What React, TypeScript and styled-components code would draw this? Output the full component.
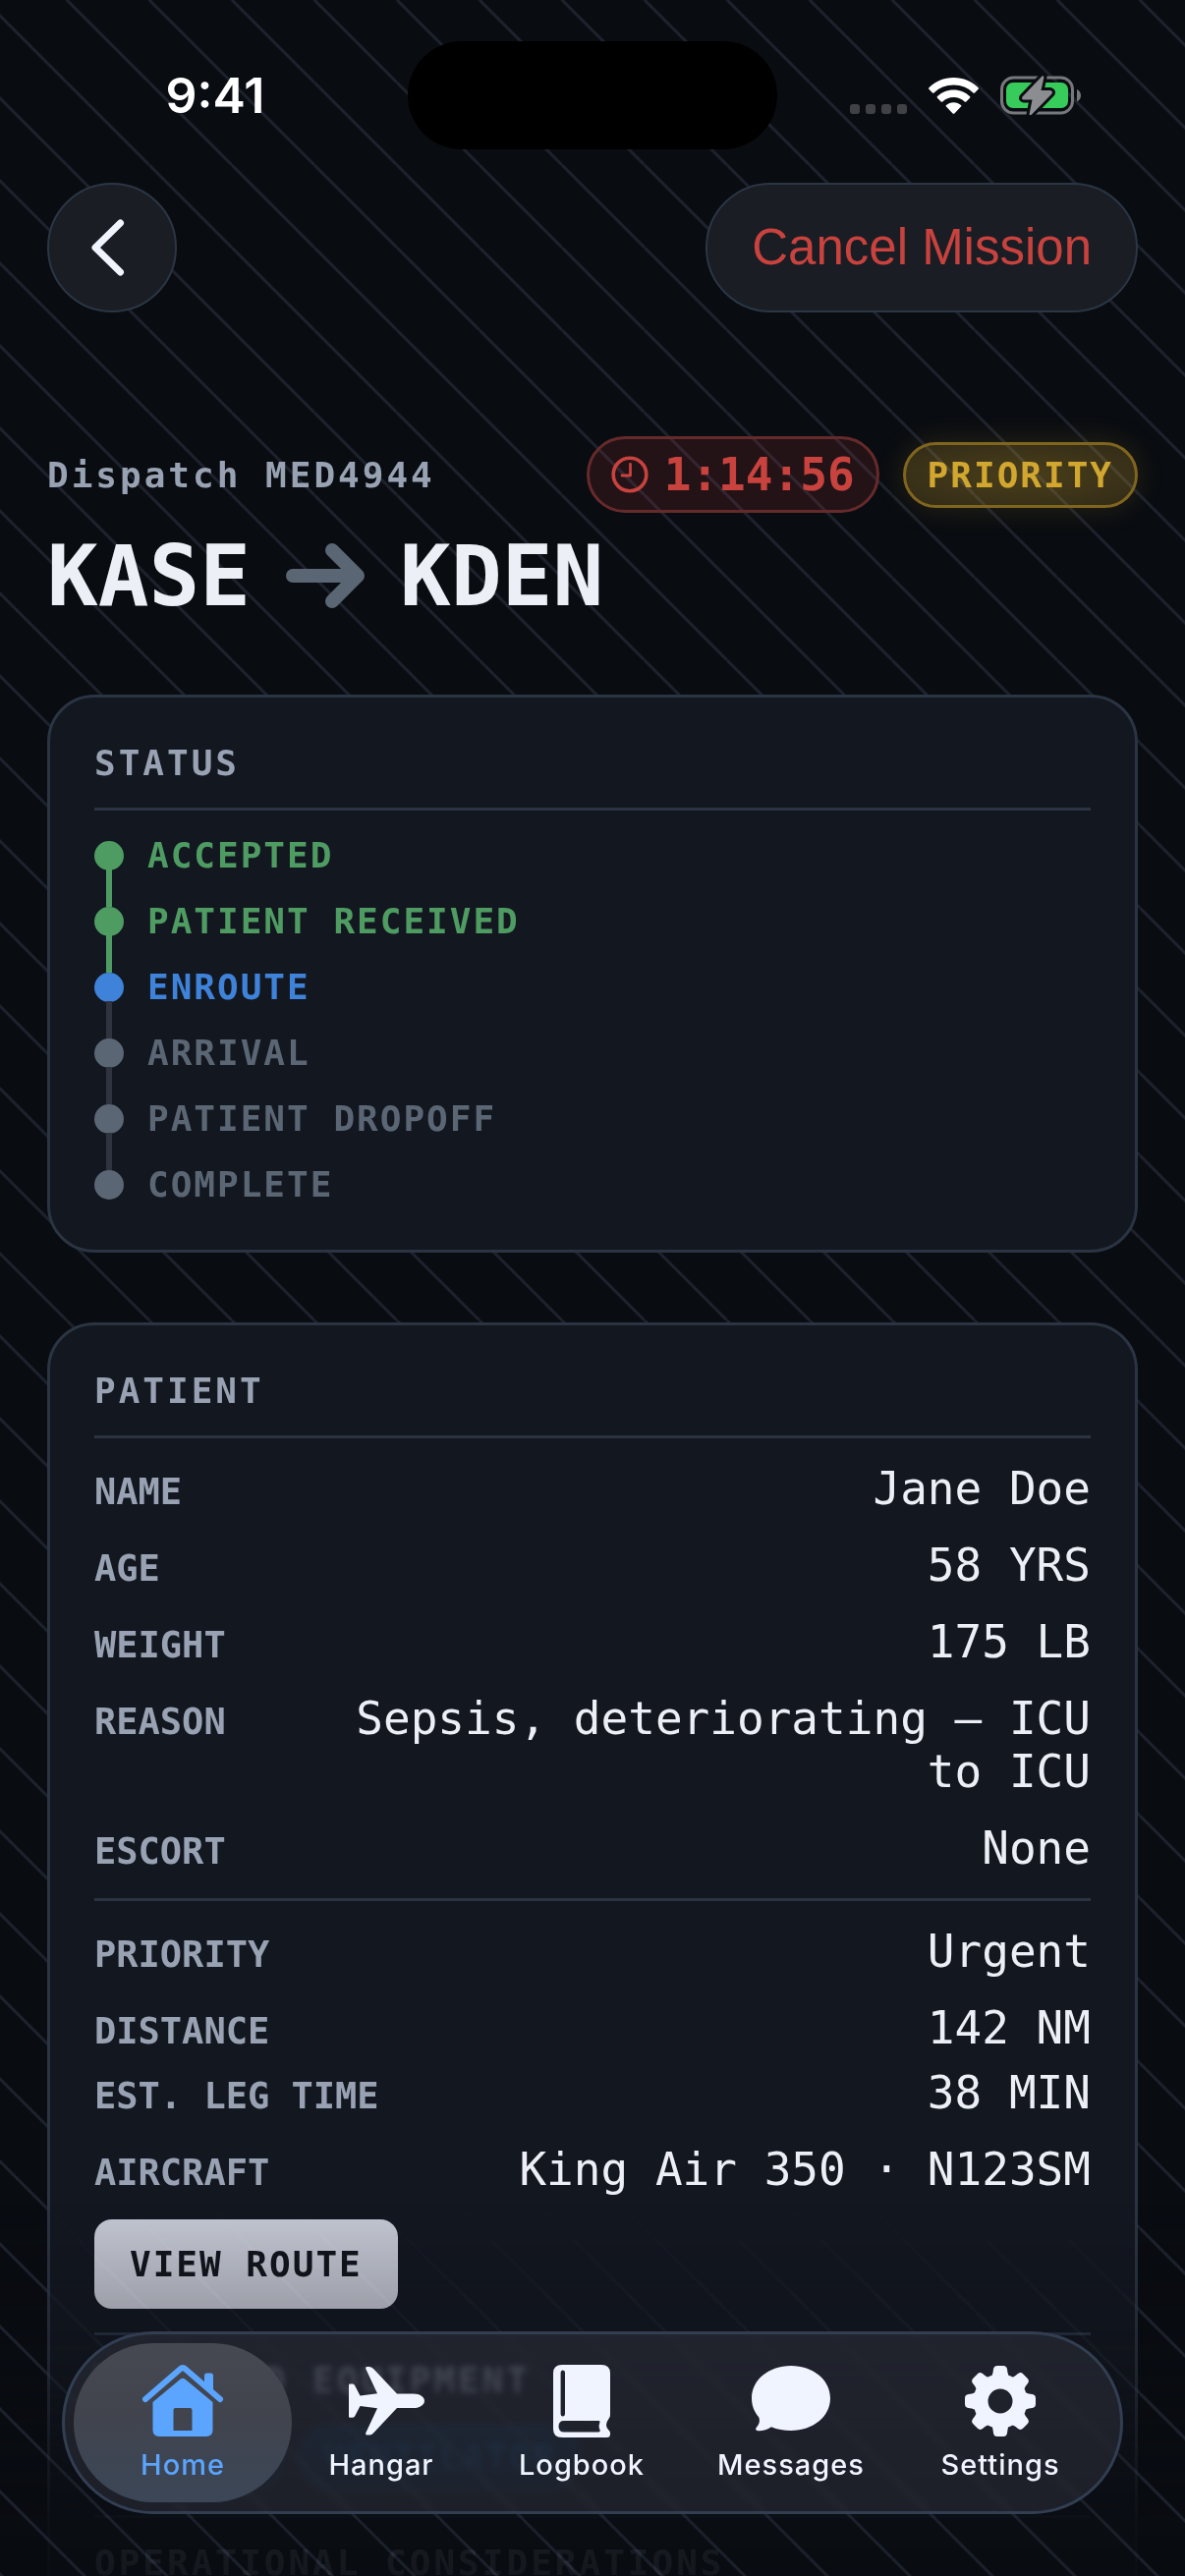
import React from 'react';
import styled, { createGlobalStyle, css } from 'styled-components';

const mono = '"DejaVu Sans Mono", "Liberation Mono", monospace';
const sans = 'Inter, "Liberation Sans", sans-serif';

const color = {
  page: '#090c11',
  card: '#131720',
  line: '#2b3442',
  text: '#eceff5',
  label: '#98a2b2',
  dim: '#5b6674',
  green: '#4f9c63',
  blue: '#3e83d9',
  red: '#c8423e',
  gold: '#d2a72f',
};

const GlobalStyle = createGlobalStyle`
  *, *::before, *::after { box-sizing: border-box; }
  html, body { margin: 0; background: ${color.page}; }
  h1, h2, p, ul, ol, dl, dd { margin: 0; padding: 0; }
  ul, ol { list-style: none; }
  button { font: inherit; cursor: pointer; border: 0; padding: 0; }
`;

/* ---------- backdrop ---------- */

const stripes = css`
  background-color: ${color.page};
  background-image: linear-gradient(
    45deg,
    #1d222d 0%,
    transparent 1.8%,
    transparent 48.2%,
    #1d222d 49.3%,
    #1d222d 50.7%,
    transparent 51.8%,
    transparent 98.2%,
    #1d222d 100%
  );
  background-size: 84px 84px;
  background-position: 68px 0;
`;

const Screen = styled.div`
  ${stripes}
  position: relative;
  height: 100vh;
  overflow: hidden;
  color: ${color.text};
  font-family: ${mono};
`;

const Veil = styled.div`
  ${stripes}
  position: absolute;
  inset: 0;
  pointer-events: none;
  mask-image: linear-gradient(to top, rgba(0, 0, 0, 0.92) 0, rgba(0, 0, 0, 0.88) 60px, rgba(0, 0, 0, 0.3) 230px, transparent 380px);
`;

/* ---------- system status bar ---------- */

const SystemBar = styled.header`
  display: grid;
  grid-template-columns: 1fr 376px 1fr;
  align-items: center;
  height: 110px;
  margin-top: 42px;
`;

const Clock = styled.time`
  justify-self: center;
  padding-left: 23px;
  font: 600 50px/60px ${sans};
  color: #fff;
`;

const Island = styled.div`
  height: 110px;
  border-radius: 55px;
  background: #000;
`;

const SystemIcons = styled.div`
  display: flex;
  align-items: center;
  justify-content: flex-end;
  gap: 22px;
  padding-right: 106px;
`;

const SignalDots = styled.div`
  display: flex;
  align-self: flex-end;
  gap: 6px;
  padding-bottom: 2px;
`;

const SignalDot = styled.span`
  width: 10px;
  height: 10px;
  border-radius: 3px;
  background: #404145;
`;

/* ---------- top navigation ---------- */

const TopBar = styled.nav`
  display: flex;
  justify-content: space-between;
  padding: 34px 48px 0;
`;

const GlassButton = styled.button<{ $round?: boolean }>`
  display: flex;
  align-items: center;
  justify-content: center;
  height: 132px;
  ${({ $round }) => ($round ? 'width: 132px; padding-right: 8px;' : 'padding: 0 45px;')}
  border: 2px solid #2b3645;
  border-radius: 66px;
  background: #1a1d24;
  color: ${color.red};
  font: 400 51px/60px "Liberation Sans", Arial, sans-serif;
`;

/* ---------- mission heading ---------- */

const Main = styled.main`
  padding: 126px 48px 0;
`;

const DispatchRow = styled.div`
  display: flex;
  align-items: center;
  gap: 24px;
  height: 78px;
`;

const DispatchId = styled.p`
  flex: 1;
  font-size: 36px;
  font-weight: 700;
  line-height: 43px;
  letter-spacing: 3px;
  color: ${color.label};
`;

const Timer = styled.div`
  display: flex;
  align-items: center;
  gap: 16px;
  height: 78px;
  padding: 0 22px;
  border: 3px solid #662a2b;
  border-radius: 39px;
  background: rgba(200, 66, 62, 0.14);
  color: ${color.red};
  font-size: 46px;
  font-weight: 700;
`;

const PriorityBadge = styled.div`
  display: flex;
  align-items: center;
  height: 67px;
  padding: 0 22px;
  border: 3px solid #80651f;
  border-radius: 34px;
  background: radial-gradient(ellipse at center, rgba(210, 167, 47, 0.32), rgba(210, 167, 47, 0.2));
  box-shadow: 0 0 30px rgba(210, 167, 47, 0.16);
  color: ${color.gold};
  font-size: 36px;
  font-weight: 700;
  letter-spacing: 2px;
`;

const Route = styled.h1`
  display: flex;
  align-items: center;
  gap: 35px;
  margin-top: 14px;
  font-size: 86px;
  font-weight: 700;
  line-height: 100px;
`;

/* ---------- cards ---------- */

const Card = styled.section`
  padding: 45px;
  border: 3px solid ${color.line};
  border-radius: 48px;
  background: ${color.card};

  & + & {
    margin-top: 71px;
  }
`;

const StatusCard = styled(Card)`
  margin-top: 71px;
`;

const CardTitle = styled.h2`
  padding-bottom: 24px;
  border-bottom: 3px solid ${color.line};
  font-size: 36px;
  font-weight: 700;
  line-height: 43px;
  letter-spacing: 3px;
  color: ${color.label};
`;

type StepState = 'done' | 'active' | 'pending';

const stepColor: Record<StepState, string> = {
  done: color.green,
  active: color.blue,
  pending: color.dim,
};

const Steps = styled.ol`
  display: grid;
  gap: 24px;
  margin-top: 24px;
`;

const Step = styled.li<{ $state: StepState }>`
  position: relative;
  display: flex;
  align-items: center;
  gap: 24px;
  font-size: 36px;
  font-weight: 700;
  line-height: 43px;
  letter-spacing: 2px;
  color: ${({ $state }) => stepColor[$state]};

  &:not(:last-child)::after {
    content: '';
    position: absolute;
    left: 12px;
    top: 36px;
    width: 6px;
    height: 38px;
    background: ${({ $state }) => ($state === 'done' ? color.green : '#2e333e')};
  }
`;

const StepDot = styled.span`
  width: 30px;
  height: 30px;
  border-radius: 50%;
  background: currentColor;
`;

const Facts = styled.dl`
  display: grid;
  gap: 24px;
  padding: 24px 0;

  & + & {
    border-top: 3px solid ${color.line};
  }
`;

const Fact = styled.div<{ $tight?: boolean }>`
  display: flex;
  align-items: baseline;
  justify-content: space-between;
  gap: 96px;
  margin-top: ${({ $tight }) => ($tight ? '-12px' : '0')};
`;

const FactName = styled.dt`
  flex: none;
  font-size: 37px;
  font-weight: 700;
  line-height: 43px;
  color: ${color.label};
`;

const FactValue = styled.dd`
  font-size: 46px;
  line-height: 54px;
  text-align: right;
`;

const RouteButton = styled.button`
  justify-self: start;
  height: 91px;
  padding: 0 36px;
  border-radius: 18px;
  background: linear-gradient(#c5c9d5, #c6c9d4);
  color: #12151c;
  font-family: ${mono};
  font-size: 36px;
  font-weight: 700;
  letter-spacing: 2px;
`;

const Equipment = styled.div`
  padding: 24px 0;
  border-top: 3px solid ${color.line};
  border-bottom: 3px solid ${color.line};
`;

const SubTitle = styled.h2`
  font-size: 36px;
  font-weight: 700;
  line-height: 43px;
  letter-spacing: 3px;
  color: ${color.label};
`;

const Chips = styled.ul`
  display: flex;
  gap: 16px;
  margin-top: 24px;
`;

const Chip = styled.li`
  height: 68px;
  padding: 0 22px;
  border: 3px solid #163a60;
  border-radius: 34px;
  background: #102a46;
  color: #1d5590;
  font-size: 36px;
  font-weight: 700;
  line-height: 62px;
  letter-spacing: 2px;
`;

const Considerations = styled.div`
  padding-top: 24px;
`;

/* ---------- tab bar ---------- */

const TabBar = styled.nav`
  position: absolute;
  left: 63px;
  right: 63px;
  bottom: 63px;
  display: grid;
  grid-template-columns: 222fr 182fr 226fr 200fr 226fr;
  height: 186px;
  padding: 9px;
  border: 3px solid #323e52;
  border-radius: 93px;
  background: rgba(36, 38, 45, 0.72);
  backdrop-filter: blur(3px) brightness(1.5) saturate(1.3);
`;

const Tab = styled.a<{ $active?: boolean }>`
  display: flex;
  flex-direction: column;
  align-items: center;
  gap: 10px;
  padding-top: 22px;
  border-radius: 81px;
  background: ${({ $active }) => ($active ? 'linear-gradient(#464952, #41444d 45%, #3b4657)' : 'none')};
  color: ${({ $active }) => ($active ? '#5ba5ff' : '#f0f4ff')};
  font: 500 29px/36px ${sans};
  letter-spacing: 1px;
  text-decoration: none;

  svg {
    display: block;
    overflow: visible;
  }
`;

/* ---------- drawings ---------- */

const WifiIcon = () => (
  <svg width="51" height="37" viewBox="0 0 51 37" fill="#fff" aria-hidden="true">
    <path d="M25.5 0C35.4 0 44.4 3.9 50.6 10.2q.7.8 0 1.6l-3.6 3.6q-.8.7-1.6 0C40.300 10.500 33.300 7.500 25.500 7.500S10.700 10.500 5.600 15.400q-.8.7-1.600 0L.4 11.800q-.7-.8 0-1.600C6.600 3.900 15.600 0 25.500 0z" />
    <path d="M25.500 12.500c6.500 0 12.300 2.500 16.500 6.600q.8.800 0 1.600l-3.700 3.700q-.8.700-1.600 0C33.800 21.600 29.900 20 25.500 20s-8.300 1.600-11.200 4.400q-.8.700-1.600 0L9 20.700q-.8-.8 0-1.600c4.200-4.100 10-6.600 16.500-6.600z" />
    <path d="M25.500 25.200c3 0 5.600 1.100 7.500 2.800q.8.800 0 1.600l-6.600 6.800q-.9.800-1.800 0L18 29.600q-.8-.8 0-1.600c1.900-1.700 4.500-2.800 7.500-2.800z" />
  </svg>
);

const BatteryIcon = () => (
  <svg width="82" height="42" viewBox="0 0 82 42" aria-hidden="true">
    <rect x="1.500" y="3" width="72" height="36" rx="12" fill="none" stroke="#77787c" strokeWidth="3" />
    <rect x="6" y="8" width="63" height="26" rx="7" fill="#37cb5b" />
    <path d="M78 15c2.600 1.200 4 3.500 4 6.200s-1.400 5-4 6.200z" fill="#77787c" />
    <path
      d="M42.500 1.500 22.500 22.500q-1.500 2.500 1.500 3h8.500L29.500 40.500q1 1.500 2.500 0L52.500 19.500q1.500-2.500-1.500-3.500H41.500L44.500 2.500q-.8-1.700-2-1z"
      fill="#8c8d91"
      stroke={color.page}
      strokeWidth="6"
      strokeLinejoin="round"
      paintOrder="stroke"
    />
  </svg>
);

const ChevronIcon = () => (
  <svg width="34" height="58" viewBox="0 0 34 58" fill="none" stroke="#f0f4ff" strokeWidth="7" strokeLinecap="round" strokeLinejoin="round" aria-hidden="true">
    <path d="M29.500 4 4 29l25.500 25" />
  </svg>
);

const ClockIcon = () => (
  <svg width="38" height="38" viewBox="0 0 38 38" fill="none" stroke="currentColor" strokeLinecap="round" strokeLinejoin="round" aria-hidden="true">
    <circle cx="19" cy="19" r="16.800" strokeWidth="3.600" />
    <path d="M19.500 8.500V20H11" strokeWidth="2.800" />
  </svg>
);

const ArrowIcon = () => (
  <svg width="82" height="82" viewBox="0 0 82 82" fill="none" stroke={color.dim} strokeWidth="16" strokeLinecap="round" strokeLinejoin="round" role="img" aria-label="to">
    <path d="M8 41h64M48 15l26 26-26 26" strokeWidth="14" />
  </svg>
);

const HomeIcon = () => (
  <svg width="82" height="74" viewBox="0 0 82 74" fill="currentColor" aria-hidden="true">
    <path d="M63 22V11q0-2.500 2.500-2.500h4Q72 8.500 72 11v20z" />
    <path d="M3 35 38.500 4.200Q41 2.200 43.500 4.200L79 35" fill="none" stroke="currentColor" strokeWidth="6" strokeLinecap="round" />
    <path fillRule="evenodd" d="M38.800 14.600q2.200-1.800 4.400 0L71.500 38v28.500q0 6.500-6.500 6.500H17q-6.500 0-6.500-6.500V38zM33.500 44q-2 0-2 2v21h19V46q0-2-2-2z" />
  </svg>
);

const PlaneIcon = () => (
  <svg width="88" height="74" viewBox="-11 -2 88 74" fill="currentColor" aria-hidden="true">
    <path d="M49 27.500H66C72.500 27.500 77 31 77 34.700S72.500 42 66 42H49L25.500 67Q23.500 69.500 21 69.500h-2.500Q16.500 69.500 17.200 67.500L29 42.300 11.500 40 6.300 50Q5.500 51.800 4 51.800H1Q0 51.800 0 50.500V19Q0 17.600 1 17.600H4Q5.500 17.600 6.300 19.400L11.500 29.400 29 27.200 17.200 2Q16.500 0 18.500 0H21Q23.500 0 25.500 2.500z" />
  </svg>
);

const BookIcon = () => (
  <svg width="58" height="74" viewBox="0 0 58 74" fill="currentColor" aria-hidden="true">
    <path
      fillRule="evenodd"
      d="M9 0h40q9 0 9 8.500V51q0 2.500-1.500 4-5 6.500 0 11.500 1.500 1 1.500 3v1q0 3.500-3.500 3.500H9q-9 0-9-8.500V8.500Q0 0 9 0zM9.800 5.500q-2.200 0-2.200 2.500v42q0 2.500 2.200 2.500T12 50V8q0-2.500-2.200-2.500zM11 57q-5.500 0-5.500 5.700T11 68.500h35.500q2-1 .7-3-1.200-3 0-6 1-2.500-1-2.500z"
    />
  </svg>
);

const MessageIcon = () => (
  <svg width="80" height="74" viewBox="0 -1 80 74" fill="currentColor" aria-hidden="true">
    <path d="M40 0c22.500 0 40 14.300 40 33S62.500 66 40 66c-7.500 0-14-1.300-20-3.800-4 2.600-9 4.300-13.500 4-2.600-.2-3-2.200-1.300-3.900 3-3 3.300-6.800 2-10C2.500 47 0 40.500 0 33 0 14.300 17.500 0 40 0z" />
  </svg>
);

const GearIcon = () => (
  <svg width="72" height="74" viewBox="0 -1 72 74" fill="currentColor" aria-hidden="true">
    <circle cx="36" cy="36" r="20" fill="none" stroke="currentColor" strokeWidth="15" />
    {[0, 45, 90, 135, 180, 225, 270, 315].map((angle) => (
      <path key={angle} transform={`rotate(${angle} 36 36)`} d="M25 13Q28 11 28.500 7L29 3.500Q29.500 0 33 0h6q3.500 0 4 3.500L43.500 7Q44 11 47 13L40 18H32z" />
    ))}
  </svg>
);

/* ---------- data ---------- */

const steps: { label: string; state: StepState }[] = [
  { label: 'ACCEPTED', state: 'done' },
  { label: 'PATIENT RECEIVED', state: 'done' },
  { label: 'ENROUTE', state: 'active' },
  { label: 'ARRIVAL', state: 'pending' },
  { label: 'PATIENT DROPOFF', state: 'pending' },
  { label: 'COMPLETE', state: 'pending' },
];

type FactData = { name: string; value: string; tight?: boolean };

const patientFacts: FactData[] = [
  { name: 'NAME', value: 'Jane Doe' },
  { name: 'AGE', value: '58 YRS' },
  { name: 'WEIGHT', value: '175 LB' },
  { name: 'REASON', value: 'Sepsis, deteriorating — ICU to ICU' },
  { name: 'ESCORT', value: 'None' },
];

const flightFacts: FactData[] = [
  { name: 'PRIORITY', value: 'Urgent' },
  { name: 'DISTANCE', value: '142 NM' },
  { name: 'EST. LEG TIME', value: '38 MIN', tight: true },
  { name: 'AIRCRAFT', value: 'King Air 350 · N123SM' },
];

const tabs = [
  { label: 'Home', Icon: HomeIcon },
  { label: 'Hangar', Icon: PlaneIcon },
  { label: 'Logbook', Icon: BookIcon },
  { label: 'Messages', Icon: MessageIcon },
  { label: 'Settings', Icon: GearIcon },
];

const renderFact = ({ name, value, tight }: FactData) => (
  <Fact key={name} $tight={tight}>
    <FactName>{name}</FactName>
    <FactValue>{value}</FactValue>
  </Fact>
);

export default function App() {
  return (
    <Screen>
      <GlobalStyle />
      <SystemBar>
        <Clock>9:41</Clock>
        <Island />
        <SystemIcons>
          <SignalDots>
            <SignalDot />
            <SignalDot />
            <SignalDot />
            <SignalDot />
          </SignalDots>
          <WifiIcon />
          <BatteryIcon />
        </SystemIcons>
      </SystemBar>

      <TopBar>
        <GlassButton $round aria-label="Back">
          <ChevronIcon />
        </GlassButton>
        <GlassButton>Cancel Mission</GlassButton>
      </TopBar>

      <Main>
        <DispatchRow>
          <DispatchId>Dispatch MED4944</DispatchId>
          <Timer>
            <ClockIcon />
            <span>1:14:56</span>
          </Timer>
          <PriorityBadge>PRIORITY</PriorityBadge>
        </DispatchRow>
        <Route>
          <span>KASE</span>
          <ArrowIcon />
          <span>KDEN</span>
        </Route>

        <StatusCard>
          <CardTitle>STATUS</CardTitle>
          <Steps>
            {steps.map(({ label, state }) => (
              <Step key={label} $state={state}>
                <StepDot />
                {label}
              </Step>
            ))}
          </Steps>
        </StatusCard>

        <Card>
          <CardTitle>PATIENT</CardTitle>
          <Facts>{patientFacts.map(renderFact)}</Facts>
          <Facts>
            {flightFacts.map(renderFact)}
            <RouteButton>VIEW ROUTE</RouteButton>
          </Facts>
          <Equipment>
            <SubTitle>REQUIRED EQUIPMENT</SubTitle>
            <Chips>
              <Chip>OXYGEN</Chip>
              <Chip>VENTILATOR</Chip>
            </Chips>
          </Equipment>
          <Considerations>
            <SubTitle>OPERATIONAL CONSIDERATIONS</SubTitle>
          </Considerations>
        </Card>
      </Main>

      <Veil />

      <TabBar>
        {tabs.map(({ label, Icon }, index) => (
          <Tab key={label} href={`#${label.toLowerCase()}`} $active={index === 0}>
            <Icon />
            {label}
          </Tab>
        ))}
      </TabBar>
    </Screen>
  );
}
